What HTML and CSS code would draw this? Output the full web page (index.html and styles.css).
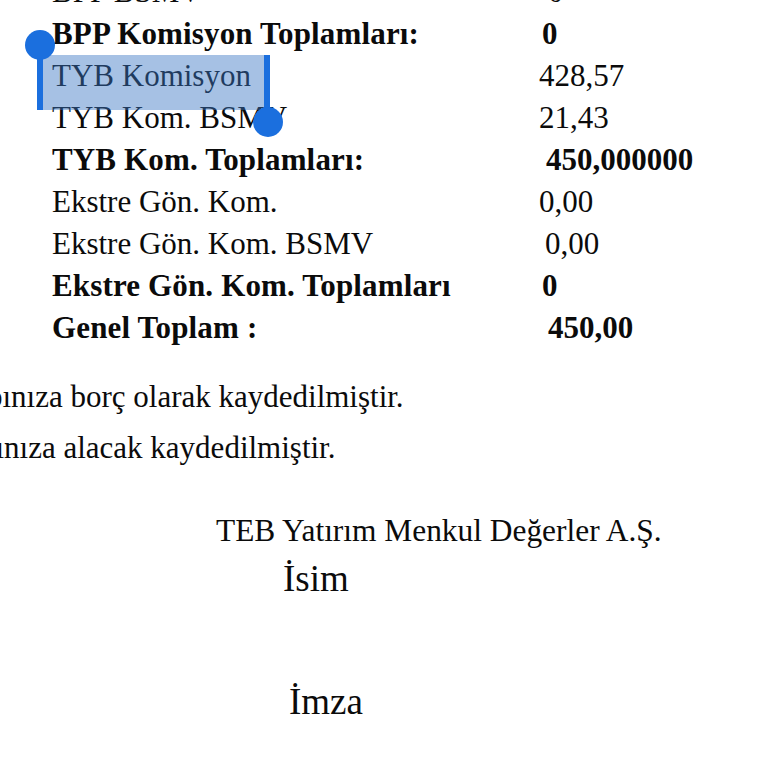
FILE: index.html
```html
<!DOCTYPE html>
<html lang="tr">
<head>
<meta charset="utf-8">
<title>Komisyon</title>
<link rel="stylesheet" href="styles.css">
</head>
<body>
<div class="page">
  <div class="totals">
    <div class="label">BPP BSMV</div><div class="val o9">0</div>
    <div class="label b">BPP Komisyon Toplamları:</div><div class="val b o3">0</div>
    <div class="label">TYB Komisyon</div><div class="val">428,57</div>
    <div class="label">TYB Kom. BSMV</div><div class="val">21,43</div>
    <div class="label b">TYB Kom. Toplamları:</div><div class="val b o7">450,000000</div>
    <div class="label">Ekstre Gön. Kom.</div><div class="val">0,00</div>
    <div class="label">Ekstre Gön. Kom. BSMV</div><div class="val o6">0,00</div>
    <div class="label b">Ekstre Gön. Kom. Toplamları</div><div class="val b o3">0</div>
    <div class="label b">Genel Toplam :</div><div class="val b o9">450,00</div>
  </div>

  <p class="note n1">Hesabınıza borç olarak kaydedilmiştir.</p>
  <p class="note n2">Hesabınıza alacak kaydedilmiştir.</p>

  <div class="sign">
    <div class="company">TEB Yatırım Menkul Değerler A.Ş.</div>
    <div class="field f-isim">İsim</div>
    <div class="field f-imza">İmza</div>
  </div>
</div>

<div class="selection" aria-hidden="true">
  <span class="sel-box"></span>
  <span class="handle handle-start"></span>
  <span class="handle handle-end"></span>
</div>
</body>
</html>
```

FILE: styles.css
```css
html, body {
  margin: 0;
  padding: 0;
  background: #ffffff;
}

body {
  width: 768px;
  height: 768px;
  overflow: hidden;
  position: relative;
  font-family: "Liberation Serif", "Times New Roman", serif;
  color: #0b0b0b;
}

.page {
  display: flex;
  flex-direction: column;
}

.totals {
  display: grid;
  grid-template-columns: 487px auto;
  grid-auto-rows: 42px;
  margin-top: -29px;
  padding-left: 52px;
  font-size: 31px;
  line-height: 42px;
}

.label,
.val {
  white-space: nowrap;
}

.b { font-weight: bold; }

.label.b { letter-spacing: 0.15px; }

.o3 { padding-left: 3px; }
.o4 { padding-left: 4px; }
.o6 { padding-left: 6px; }
.o7 { padding-left: 7px; }
.o9 { padding-left: 9px; }

.note {
  margin: 0;
  font-size: 31px;
  line-height: 51px;
  white-space: nowrap;
}

.n1 {
  margin-top: 22px;
  margin-left: -75px;
}

.n2 {
  margin-left: -82px;
}

.sign {
  display: flex;
  flex-direction: column;
  margin-top: 37px;
}

.company {
  margin-left: 216px;
  font-size: 31.4px;
  line-height: 42px;
  white-space: nowrap;
}

.field {
  font-size: 37px;
  line-height: 42px;
}

.f-isim {
  margin-left: 283px;
  margin-top: 6px;
}

.f-imza {
  margin-left: 289px;
  margin-top: 81px;
}

/* text selection overlay */
.selection {
  position: absolute;
  left: 0;
  top: 0;
  width: 0;
  height: 0;
}

.sel-box {
  position: absolute;
  left: 42px;
  top: 55px;
  width: 222px;
  height: 55px;
  background: rgba(58, 118, 196, 0.45);
}

.handle {
  position: absolute;
  width: 6px;
  height: 55px;
  background: #1b6fde;
}

.handle::after {
  content: "";
  position: absolute;
  width: 30px;
  height: 30px;
  border-radius: 50%;
  background: #1b6fde;
  left: -12px;
}

.handle-start {
  left: 37px;
  top: 55px;
}

.handle-start::after {
  top: -25px;
}

.handle-end {
  left: 264px;
  top: 55px;
}

.handle-end::after {
  top: 52px;
  left: -11px;
}
```
